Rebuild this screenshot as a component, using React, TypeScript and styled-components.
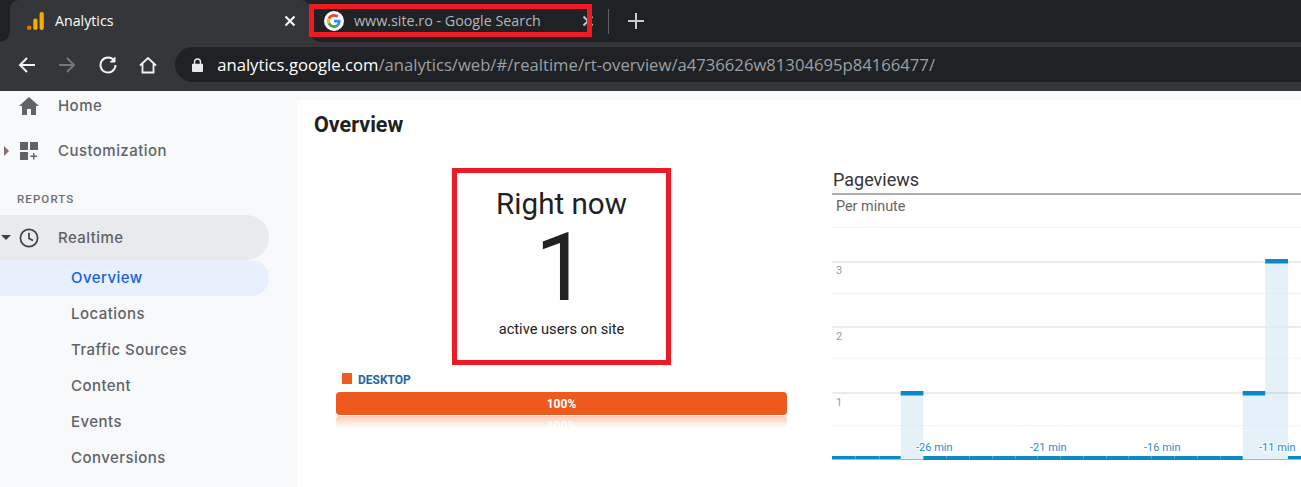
import React from "react";
import styled, { createGlobalStyle } from "styled-components";

const Global = createGlobalStyle`
  html, body { margin: 0; padding: 0; background: #fff; }
  body { font-family: Roboto, "Liberation Sans", sans-serif; }
  * { box-sizing: border-box; }
`;

const Page = styled.div`
  width: 1301px; height: 487px; overflow: hidden; position: relative;
  display: flex; flex-direction: column; background: #f8f9fa;
`;

/* ---------- browser chrome ---------- */
const TabStrip = styled.div`
  height: 42px; background: #202124; display: flex; padding-left: 10px; flex: none;
  font-family: "Open Sans", "Noto Sans", sans-serif;
`;
const ActiveTab = styled.div`
  width: 300px; height: 42px; background: #35363a; border-radius: 9px 9px 0 0;
  display: flex; align-items: center; padding: 0 14px 0 17px; position: relative; color: #fff; font-size: 14.2px;
  &::before, &::after {
    content: ""; position: absolute; bottom: 0; width: 10px; height: 10px;
  }
  &::before { left: -10px; background: radial-gradient(circle at 0 0, #202124 9.5px, #35363a 10px); }
  &::after { right: -10px; background: radial-gradient(circle at 100% 0, #202124 9.5px, #35363a 10px); }
`;
const OtherTab = styled.div`
  width: 284px; height: 42px; display: flex; align-items: center; padding: 0 0 0 14px;
  color: #b4b7bb; font-size: 14.3px; position: relative;
`;
const TabTitle = styled.span`
  flex: 1; margin-left: ${(p: { $gap: number }) => p.$gap}px; white-space: nowrap; padding-bottom: 1px;
`;
const Divider = styled.div`
  width: 1px; height: 25px; background: #5f6368; margin: 9px 0 0 14px;
`;
const NewTab = styled.div`
  margin-left: 19px; height: 42px; display: flex; align-items: center;
`;
const TabMarker = styled.div`
  position: absolute; left: 309px; top: 4px; width: 283px; height: 33px;
  border: 5px solid #ed1c24; pointer-events: none;
`;
const TabCloseOver = styled.div`
  position: absolute; left: 582px; top: 15px; width: 12px; height: 12px; display: flex;
`;
const Toolbar = styled.div`
  height: 49px; background: #35363a; display: flex; align-items: flex-start; flex: none; padding: 5px 0 0 17px;
`;
const NavButton = styled.div`
  width: 20px; height: 35px; margin-right: 20.3px; display: flex; align-items: center; justify-content: center; flex: none;
`;
const Omnibox = styled.div`
  flex: 1; height: 35px; margin-left: -3px; background: #202124; border-radius: 18px 0 0 18px;
  display: flex; align-items: center; padding-left: 17px; white-space: nowrap;
  font-family: "Open Sans", "Noto Sans", sans-serif; font-size: 16.67px; color: #9aa0a6;
`;
const Host = styled.span`color: #fff; margin-left: 14px;`;

/* ---------- page ---------- */
const Body = styled.div`
  flex: 1; display: flex; min-height: 0;
`;
const Sidebar = styled.nav`
  width: 297px; flex: none; background: #f8f9fa; color: #5f6368;
  display: flex; flex-direction: column;
  font-family: Inter, Roboto, sans-serif;
`;
const NavRow = styled.div<{ $h: number }>`
  height: ${(p) => p.$h}px; display: flex; align-items: center; font-size: 15px; font-weight: 500;
  letter-spacing: 0.45px; flex: none; position: relative;
`;
const Caret = styled.div`
  width: 12px; margin-right: 6px; display: flex; justify-content: center; flex: none;
`;
const IconSlot = styled.div`
  width: 22px; height: 22px; display: flex; align-items: center; justify-content: center; flex: none; margin-right: 18px;
`;
const SectionLabel = styled.div`
  height: 34px; padding: 11px 0 0 17px; font-size: 11.5px; font-weight: 500; letter-spacing: 1.1px; color: #6c7074; flex: none;
  font-family: Roboto, sans-serif;
`;
const RealtimeRow = styled(NavRow)`
  width: 269px; background: #e8eaed; border-radius: 0 23px 23px 0; color: #5f6368;
`;
const SubItem = styled.div<{ $active?: boolean }>`
  width: 269px; height: 36px; flex: none; display: flex; align-items: center; padding: 0 0 2px 71px;
  font-size: 15px; font-weight: 500; letter-spacing: 0.45px;
  color: ${(p) => (p.$active ? "#1a5fd6" : "#5f6368")};
  background: ${(p) => (p.$active ? "#e8f0fe" : "transparent")};
  border-radius: 0 18px 18px 0;
`;
const Main = styled.main`
  flex: 1; background: #fff; margin-top: 9px; display: flex; flex-direction: column; padding: 0 0 0 17px; min-width: 0;
`;
const Heading = styled.h1`
  margin: 12px 0 0; font-size: 21.5px; line-height: 26px; font-weight: 700; color: #212121; font-family: Roboto, sans-serif;
`;
const Columns = styled.div`
  display: flex; margin-top: 30px;
`;
const LeftCol = styled.div`
  width: 473px; margin-left: 22px; flex: none; display: flex; flex-direction: column;
`;
const RightNow = styled.section`
  width: 219px; height: 197px; margin-left: 116px; border: 5px solid #ed1c24; display: flex; flex-direction: column;
  align-items: center; color: #212121; padding-top: 13px;
`;
const RightNowTitle = styled.div`font-size: 29.6px; line-height: 36px; font-weight: 400;`;
const RightNowValue = styled.div`font-size: 94px; line-height: 92px; font-weight: 400;`;
const RightNowNote = styled.div`font-size: 14.65px; line-height: 18px; margin-top: 6px;`;
const Legend = styled.div`
  display: flex; align-items: center; margin: 6px 0 0 6px; height: 17px;
  font-size: 12px; font-weight: 700; color: #1c66a6;
`;
const Swatch = styled.span`
  width: 10px; height: 11px; background: #f05a1e; margin-right: 6px; position: relative; top: -1px;
`;
const BarTrack = styled.div`
  margin-top: 4px; width: 451px; height: 23px; background: #ee591d; border-radius: 4px; color: #fff;
  font-size: 12px; font-weight: 700; display: flex; align-items: center; justify-content: center;
`;
const BarReflection = styled.div`
  margin-top: 1px; width: 451px; height: 12px; border-radius: 4px 4px 0 0; overflow: hidden; color: #fff;
  background: linear-gradient(#f9c6b0, #fff);
  font-size: 12px; font-weight: 700; text-align: center; line-height: 20px; opacity: .9;
`;
const RightCol = styled.div`
  flex: 1; min-width: 0; margin-left: 23px;
`;
const ChartTitle = styled.div`
  font-size: 18px; line-height: 24px; color: #333; padding-left: 1px; height: 27px;
  border-bottom: 2px solid #aeaeae; margin-right: -10px;
`;
const ChartSub = styled.div`
  font-size: 14.4px; line-height: 20px; color: #666; padding: 2px 0 0 4px; height: 19px;
`;

const Home = () => (
  <svg width="20" height="18" viewBox="0 0 20 18"><path d="M8 18v-6h4v6h5V9h3L10 0 0 9h3v9z" fill="#5f6368" /></svg>
);
const Custom = () => (
  <svg width="18" height="18" viewBox="0 0 18 18" fill="#5f6368">
    <rect x="0" y="0" width="8" height="8" /><rect x="10" y="0" width="8" height="8" /><rect x="0" y="10" width="8" height="8" />
    <path d="M13 11h1.4v2.6H17V15h-2.6v2.6H13V15h-2.6v-1.4H13z" />
  </svg>
);
const Clock = () => (
  <svg width="20" height="20" viewBox="0 0 20 20" fill="none" stroke="#3c4043" strokeWidth="1.7">
    <circle cx="10" cy="10" r="8.6" /><path d="M10 4.8V10.4L14 12.6" />
  </svg>
);
const G = () => (
  <svg width="20" height="20" viewBox="0 0 20 20">
    <circle cx="10" cy="10" r="10" fill="#fff" />
    <g transform="translate(3 3) scale(.29)">
      <path fill="#EA4335" d="M24 9.5c3.5 0 6.6 1.2 9.1 3.6l6.8-6.8C35.800 2.400 30.300 0 24 0 14.600 0 6.500 5.400 2.600 13.200l7.900 6.200C12.400 13.700 17.700 9.500 24 9.500z" />
      <path fill="#4285F4" d="M46.900 24.500c0-1.600-.1-3.100-.4-4.500H24v9h12.900c-.6 3-2.200 5.500-4.700 7.200l7.700 6c4.500-4.200 7-10.300 7-17.700z" />
      <path fill="#FBBC05" d="M10.500 28.600c-.5-1.400-.8-3-.8-4.600s.3-3.200.8-4.600l-7.900-6.200C.9 16.500 0 20.100 0 24s.9 7.500 2.600 10.800l7.900-6.200z" />
      <path fill="#34A853" d="M24 48c6.500 0 11.900-2.100 15.900-5.800l-7.700-6c-2.200 1.500-4.900 2.300-8.200 2.300-6.300 0-11.600-4.200-13.500-9.900l-7.900 6.200C6.500 42.600 14.600 48 24 48z" />
    </g>
  </svg>
);
const Analytics = () => (
  <svg width="17" height="18" viewBox="0 0 17 18">
    <rect x="12.600" y="0" width="4.200" height="18" rx="2" fill="#f9ab00" />
    <rect x="6.300" y="6.500" width="4.200" height="11.500" rx="2" fill="#f9ab00" />
    <circle cx="2.200" cy="15.800" r="2.200" fill="#e37400" />
  </svg>
);
const Close = ({ c }: { c: string }) => (
  <svg width="12" height="12" viewBox="0 0 12 12" stroke={c} strokeWidth="2"><path d="M1.500 1.500l9 9M10.500 1.500l-9 9" /></svg>
);
const stroke = { fill: "none", strokeWidth: 2 } as const;

type Bar = { x: number; w: number; y: number };
const bars: Bar[] = [
  { x: 68.700, w: 22.700, y: 391 },
  { x: 410.700, w: 22.500, y: 391 },
  { x: 433.200, w: 22.800, y: 259 },
];
const grid: [number, string][] = [[228, "#f6f6f6"], [262, "#ececec"], [294, "#f3f3f3"], [327, "#ececec"], [359, "#f3f3f3"], [393, "#ececec"], [426, "#f3f3f3"]];
const ticks = [{ t: "3", y: 274 }, { t: "2", y: 340 }, { t: "1", y: 406 }];
const times = [{ t: "-26 min", x: 84 }, { t: "-21 min", x: 198 }, { t: "-16 min", x: 312 }, { t: "-11 min", x: 427 }];
const segments = [0, 23, 47, 68.700, 91.400, 114, 137, 160, 183, 205, 228, 251, 274, 296, 319, 342, 365, 388, 456];

const Chart = () => {
  const top = 214;
  return (
    <svg width="469" height="250" viewBox={`0 ${top} 469 250`} style={{ display: "block" }}>
      {grid.map(([y, c]) => <rect key={y} x="0" y={y - 1} width="469" height={c === "#ececec" ? 2 : 1} fill={c} />)}
      {bars.map((b) => <rect key={b.x} x={b.x} y={b.y} width={b.w} height={459 - b.y} fill="#d9ebf5" fillOpacity=".68" />)}
      {grid.filter(([y]) => y === 393).map(([y]) => <rect key={y} x="433" y={y - 1} width="23" height="2" fill="#cfdfe8" />)}
      {bars.map((b) => <rect key={b.x + "c"} x={b.x} y={b.y} width={b.w} height="4.500" fill="#0a8bc7" />)}
      <rect x="0" y="456" width="68.700" height="3.500" fill="#0a8bc7" />
      <rect x="91.400" y="456" width="319.300" height="3.500" fill="#0a8bc7" />
      <rect x="456" y="456" width="13" height="3.500" fill="#0a8bc7" />
      <rect x="68.700" y="459" width="387.300" height="1" fill="#b5b5b5" />
      <rect x="91.400" y="459" width="319.300" height="1" fill="#0a8bc7" />
      {segments.slice(1, 18).filter((s) => s > 91.500 || s < 68).map((s) => <rect key={s} x={s} y="456" width="1" height="3" fill="#4fa9d6" />)}
      {ticks.map((t) => (
        <text key={t.t} x="4" y={t.y} fontSize="11" fill="#9a9a9a" fontFamily="Roboto, sans-serif">{t.t}</text>
      ))}
      {times.map((t) => (
        <text key={t.t} x={t.x} y="451" fontSize="11" fill="#2f8cc6" stroke="#fff" strokeWidth="2.500" paintOrder="stroke" strokeOpacity=".75" fontFamily="Roboto, sans-serif">{t.t}</text>
      ))}
    </svg>
  );
};

export default function App() {
  return (
    <Page>
      <Global />
      <TabStrip>
        <ActiveTab>
          <Analytics />
          <TabTitle $gap={11}>Analytics</TabTitle>
          <Close c="#fff" />
        </ActiveTab>
        <OtherTab>
          <G />
          <TabTitle $gap={10}>www.site.ro - Google Search</TabTitle>
        </OtherTab>
        <Divider />
        <NewTab>
          <svg width="16" height="16" viewBox="0 0 16 16" fill="#c8cacc"><path d="M7 0h2v7h7v2H9v7H7V9H0V7h7z" /></svg>
        </NewTab>
      </TabStrip>
      <TabCloseOver><Close c="#c4c7c9" /></TabCloseOver>
      <TabMarker />
      <Toolbar>
        <NavButton>
          <svg width="18" height="18" viewBox="0 0 18 18" {...stroke} stroke="#f1f3f4"><path d="M17 9H2M9 2L2 9l7 7" /></svg>
        </NavButton>
        <NavButton>
          <svg width="18" height="18" viewBox="0 0 18 18" {...stroke} stroke="#74777a"><path d="M1 9h15M9 2l7 7-7 7" /></svg>
        </NavButton>
        <NavButton>
          <svg width="18" height="18" viewBox="0 0 18 18" {...stroke} stroke="#f1f3f4"><path d="M15.300 5A7.500 7.500 0 1 0 16.500 9" /><path d="M16 1v5h-5" fill="#f1f3f4" strokeWidth="1" /></svg>
        </NavButton>
        <NavButton>
          <svg width="18" height="18" viewBox="0 0 18 18" {...stroke} stroke="#f1f3f4" strokeWidth="1.800"><path d="M1 9.500L9 2l8 7.500M3.500 8v8.500h11V8" /></svg>
        </NavButton>
        <Omnibox>
          <svg width="11" height="14" viewBox="0 0 12 15" fill="#e8eaed"><path d="M2 6V4.200a4 4 0 0 1 8 0V6h1a1 1 0 0 1 1 1v7a1 1 0 0 1-1 1H1a1 1 0 0 1-1-1V7a1 1 0 0 1 1-1zm1.500 0h5V4.200a2.500 2.500 0 0 0-5 0z" /></svg>
          <Host>analytics.google.com</Host>/analytics/web/#/realtime/rt-overview/a4736626w81304695p84166477/
        </Omnibox>
      </Toolbar>
      <Body>
        <Sidebar>
          <NavRow $h={29}>
            <Caret />
            <IconSlot><Home /></IconSlot>
            Home
          </NavRow>
          <NavRow $h={61}>
            <Caret><svg width="5" height="10" viewBox="0 0 5 10"><path d="M0 0l5 5-5 5z" fill="#8a6f6a" /></svg></Caret>
            <IconSlot><Custom /></IconSlot>
            Customization
          </NavRow>
          <SectionLabel>REPORTS</SectionLabel>
          <RealtimeRow $h={45}>
            <Caret><svg width="10" height="5" viewBox="0 0 10 5"><path d="M0 0h10L5 5z" fill="#3c4043" /></svg></Caret>
            <IconSlot><Clock /></IconSlot>
            Realtime
          </RealtimeRow>
          <SubItem $active>Overview</SubItem>
          <SubItem>Locations</SubItem>
          <SubItem>Traffic Sources</SubItem>
          <SubItem>Content</SubItem>
          <SubItem>Events</SubItem>
          <SubItem>Conversions</SubItem>
        </Sidebar>
        <Main>
          <Heading>Overview</Heading>
          <Columns>
            <LeftCol>
              <RightNow>
                <RightNowTitle>Right now</RightNowTitle>
                <RightNowValue>1</RightNowValue>
                <RightNowNote>active users on site</RightNowNote>
              </RightNow>
              <Legend><Swatch />DESKTOP</Legend>
              <BarTrack>100%</BarTrack>
              <BarReflection>100%</BarReflection>
            </LeftCol>
            <RightCol>
              <ChartTitle>Pageviews</ChartTitle>
              <ChartSub>Per minute</ChartSub>
              <Chart />
            </RightCol>
          </Columns>
        </Main>
      </Body>
    </Page>
  );
}
